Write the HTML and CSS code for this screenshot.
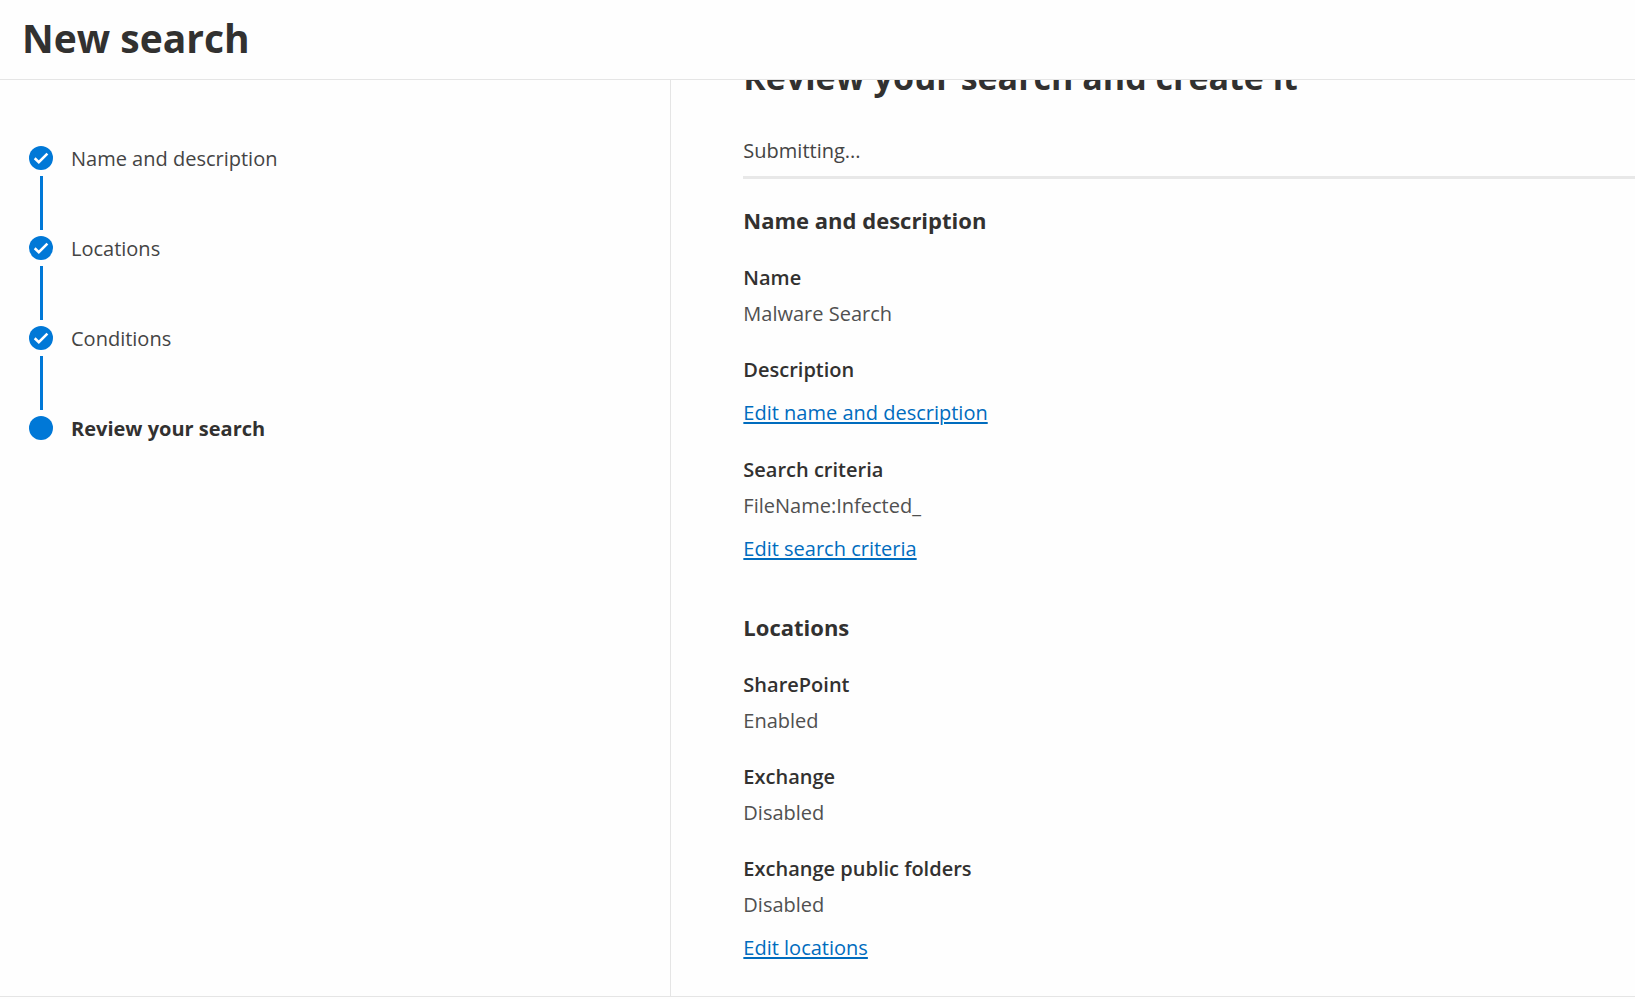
FILE: index.html
```html
<!DOCTYPE html>
<html lang="en">
<head>
<meta charset="utf-8">
<title>New search</title>
<link rel="stylesheet" href="styles.css">
</head>
<body class="page">
<header class="header"><h1 class="title">New search</h1></header>
<div class="body">
  <nav class="steps" aria-label="Wizard steps">
    <ol class="step-list">
      <li class="step">
        <svg class="dot" viewBox="0 0 24 24" aria-hidden="true"><circle cx="12" cy="12" r="12"/><path d="M5.700 12.300l4.100 3.900 8.600-8.600"/></svg>
        <span class="step-label">Name and description</span>
      </li>
      <li class="step">
        <svg class="dot" viewBox="0 0 24 24" aria-hidden="true"><circle cx="12" cy="12" r="12"/><path d="M5.700 12.300l4.100 3.900 8.600-8.600"/></svg>
        <span class="step-label">Locations</span>
      </li>
      <li class="step">
        <svg class="dot" viewBox="0 0 24 24" aria-hidden="true"><circle cx="12" cy="12" r="12"/><path d="M5.700 12.300l4.100 3.900 8.600-8.600"/></svg>
        <span class="step-label">Conditions</span>
      </li>
      <li class="step" aria-current="step">
        <svg class="dot" viewBox="0 0 24 24" aria-hidden="true"><circle cx="12" cy="12" r="12"/></svg>
        <span class="step-label current">Review your search</span>
      </li>
    </ol>
  </nav>
  <main class="content">
    <h2 class="heading">Review your search and create it</h2>
    <p class="status" role="status">Submitting...</p>
    <div class="progress"></div>

    <section class="section">
      <h3 class="section-title">Name and description</h3>
      <div class="group">
        <dl class="fields">
          <div class="field"><dt class="term">Name</dt><dd class="value">Malware Search</dd></div>
          <div class="field"><dt class="term">Description</dt></div>
        </dl>
        <a class="link" href="#name">Edit name and description</a>
      </div>
      <div class="group">
        <dl class="fields">
          <div class="field"><dt class="term">Search criteria</dt><dd class="value">FileName:Infected_</dd></div>
        </dl>
        <a class="link" href="#criteria">Edit search criteria</a>
      </div>
    </section>

    <section class="section">
      <h3 class="section-title">Locations</h3>
      <div class="group">
        <dl class="fields">
          <div class="field"><dt class="term">SharePoint</dt><dd class="value">Enabled</dd></div>
          <div class="field"><dt class="term">Exchange</dt><dd class="value">Disabled</dd></div>
          <div class="field"><dt class="term">Exchange public folders</dt><dd class="value">Disabled</dd></div>
        </dl>
        <a class="link" href="#locations">Edit locations</a>
      </div>
    </section>
  </main>
</div>
<footer class="footer"></footer>
</body>
</html>
```

FILE: styles.css
```css
* { box-sizing: border-box; margin: 0; padding: 0; }

.page {
  display: flex;
  flex-direction: column;
  height: 100vh;
  overflow: hidden;
  background: #fefefe;
  color: #323130;
  font: 400 20px/28px "Segoe UI", "Open Sans", "Noto Sans", sans-serif;
}

.header { padding: 10px 22px 13px; border-bottom: 1px solid #e5e5e5; }
.title { font-size: 39px; line-height: 56px; font-weight: 700; }

.body { flex: 1; min-height: 0; display: flex; }

.steps {
  flex: 0 0 calc(41% + 1px);
  padding: 63px 29px;
  border-right: 1px solid #e5e5e5;
}
.step-list { list-style: none; display: flex; flex-direction: column; gap: 60px; }
.step { position: relative; display: flex; align-items: center; gap: 18px; }
.step:not(:last-child)::after {
  content: "";
  position: absolute;
  left: 11px;
  top: 33px;
  width: 3px;
  height: 54px;
  background: #0078d7;
}
.dot { width: 24px; height: 24px; fill: #0078d7; }
.dot path { fill: none; stroke: #fff; stroke-width: 2.600; }
.step-label { padding-top: 2px; color: #444; }
.current { font-weight: 700; color: #323130; }

.content { flex: 1; min-width: 0; overflow: hidden; padding-left: 72px; }
.heading {
  margin-top: -27px;
  font-size: 34px;
  line-height: 48px;
  font-weight: 700;
}
.status { margin-top: 36px; color: #444; }
.progress { margin-top: 11px; height: 3px; background: #e8e8e8; }

.section { padding-top: 27px; }
.section + .section { padding-top: 50px; }
.section-title { margin-bottom: 30px; font-size: 22px; line-height: 28px; font-weight: 700; }
.group + .group { margin-top: 29px; }
.fields { display: flex; flex-direction: column; gap: 28px; margin-bottom: 15px; }
.field { display: flex; flex-direction: column; gap: 8px; }
.term { font-weight: 600; }
.value { color: #505050; }
.link {
  display: table;
  color: #006cbe;
  text-decoration: underline;
  text-decoration-thickness: 2px;
  text-underline-offset: 2px;
}

.footer { height: 3px; border-top: 1px solid #e5e5e5; }
```
